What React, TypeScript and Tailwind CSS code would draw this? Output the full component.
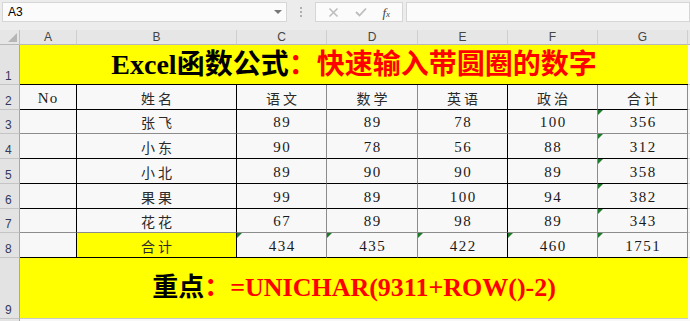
import React from "react";

const BLACK = "border-r-black";
const GRAY = "border-r-[#8c8c8c]";

const colW = ["w-[57px]", "w-[160px]", "w-[90px]", "w-[91px]", "w-[90px]", "w-[90px]", "w-[90px]"];
const colR = [BLACK, BLACK, GRAY, GRAY, BLACK, GRAY, GRAY];
const letters = ["A", "B", "C", "D", "E", "F", "G"];

type Row = {
  n: number;
  h: string;
  b: string;
  cells: string[];
  tri: boolean[];
  yellowB?: boolean;
};

const rows: Row[] = [
  { n: 2, h: "h-[25px]", b: "border-b-black", cells: ["No", "姓名", "语文", "数学", "英语", "政治", "合计"], tri: [false, false, false, false, false, false, false] },
  { n: 3, h: "h-[24px]", b: "border-b-[#8c8c8c]", cells: ["", "张飞", "89", "89", "78", "100", "356"], tri: [false, false, false, false, false, false, true] },
  { n: 4, h: "h-[25px]", b: "border-b-black", cells: ["", "小东", "90", "78", "56", "88", "312"], tri: [false, false, false, false, false, false, true] },
  { n: 5, h: "h-[25px]", b: "border-b-black", cells: ["", "小北", "89", "90", "90", "89", "358"], tri: [false, false, false, false, false, false, true] },
  { n: 6, h: "h-[25px]", b: "border-b-black", cells: ["", "果果", "99", "89", "100", "94", "382"], tri: [false, false, false, false, false, false, true] },
  { n: 7, h: "h-[24px]", b: "border-b-[#8c8c8c]", cells: ["", "花花", "67", "89", "98", "89", "343"], tri: [false, false, false, false, false, false, true] },
  { n: 8, h: "h-[25px]", b: "border-b-black", cells: ["", "合计", "434", "435", "422", "460", "1751"], tri: [false, false, true, true, true, true, true], yellowB: true },
];

const isNum = (s: string) => /^[0-9]+$/.test(s);

function RowHead({ n, h }: { n: number | string; h: string }) {
  return (
    <div className={`${h} w-[20px] shrink-0 bg-[#e3e3e3] border-r border-r-[#a8a8a8] border-b border-b-[#c4c4c4] flex items-end pl-[5px] pb-[1px] text-[12px] leading-[14px] text-[#33395a] font-['Liberation_Sans',sans-serif]`}>
      {n}
    </div>
  );
}

export default function App() {
  return (
    <div className="w-[690px] h-[321px] overflow-hidden bg-[#f0f0f0] font-['Liberation_Sans',sans-serif]">
      {/* formula bar */}
      <div className="h-[30px] flex items-start pt-[2px] bg-[#ececec]">
        <div className="ml-[2px] w-[285px] h-[20px] bg-[#fbfbfb] border border-[#d6d6d6] flex items-center justify-between pl-[5px] pr-[4px]">
          <span className="text-[12px] text-black">A3</span>
          <svg width="8" height="5" viewBox="0 0 8 5"><polygon points="0,0 8,0 4,4" fill="#777" /></svg>
        </div>
        <div className="w-[28px] h-[20px] flex flex-col items-center justify-center gap-[2px]">
          <div className="w-[2px] h-[2px] bg-[#b0b0b0]" />
          <div className="w-[2px] h-[2px] bg-[#b0b0b0]" />
          <div className="w-[2px] h-[2px] bg-[#b0b0b0]" />
        </div>
        <div className="w-[88px] h-[20px] bg-[#fbfbfb] border border-[#d6d6d6] flex items-center justify-around px-[4px]">
          <svg width="11" height="11" viewBox="0 0 11 11"><path d="M1.5 1.5 L9.5 9.5 M9.5 1.5 L1.5 9.5" stroke="#bdbdbd" strokeWidth="1.6" /></svg>
          <svg width="12" height="10" viewBox="0 0 12 10"><path d="M1 5 L4.5 8.5 L11 1.5" stroke="#bdbdbd" strokeWidth="1.8" fill="none" /></svg>
          <span className="italic text-[12px] text-[#444] font-['Liberation_Serif',serif] leading-none"><span className="text-[13px]">f</span><span className="text-[9px]">x</span></span>
        </div>
        <div className="ml-[3px] flex-1 h-[20px] bg-[#fbfbfb] border border-[#d6d6d6]" />
      </div>

      {/* column header */}
      <div className="h-[15px] flex bg-[#e6e6e6]">
        <div className="w-[20px] shrink-0 h-[15px] border-r border-r-[#c0c0c0] border-b border-b-[#b8b8b8] relative">
          <svg className="absolute left-0 top-0" width="20" height="15" viewBox="0 0 20 15"><polygon points="17,3 17,12 8,12" fill="#b6b6b6" /></svg>
        </div>
        {letters.map((l, i) => (
          <div key={l} className={`${colW[i]} shrink-0 h-[15px] border-r border-r-[#cfcfcf] border-b border-b-[#b8b8b8] flex items-center justify-center text-[12px] text-[#444] leading-none`}>
            {l}
          </div>
        ))}
        <div className="flex-1 border-b border-b-[#b8b8b8]" />
      </div>

      {/* row 1 title */}
      <div className="flex">
        <RowHead n={1} h="h-[40px]" />
        <div className="w-[668px] shrink-0 h-[40px] bg-[#ffff00] border-b border-b-black flex items-center justify-center font-bold text-[28px] leading-none font-['Liberation_Serif','Noto_Sans_CJK_SC',serif] whitespace-nowrap">
          <span className="text-black">Excel函数公式</span>
          <span className="text-[#ff0000]">：快速输入带圆圈的数字</span>
        </div>
        <div className="flex-1 bg-[#f8f8f8] border-b border-b-[#d0d0d0]" />
      </div>

      {/* data rows */}
      {rows.map((r) => (
        <div key={r.n} className="flex">
          <RowHead n={r.n} h={r.h} />
          {r.cells.map((c, i) => {
            const yellow = r.yellowB && i === 1;
            return (
              <div
                key={i}
                className={`${colW[i]} ${r.h} shrink-0 relative border-r ${colR[i]} border-b ${r.b} ${yellow ? "bg-[#ffff00]" : "bg-[#f8f8f8]"} flex items-end justify-center pb-[2px] whitespace-nowrap`}
              >
                {r.tri[i] && (
                  <div className="absolute left-0 top-0 w-0 h-0 border-t-[5px] border-t-[#1f7a2c] border-r-[5px] border-r-transparent" />
                )}
                {isNum(c) ? (
                  <span className="text-[15px] leading-[17px] tracking-[1.5px] pl-[1.5px] text-[#1a1a1a] font-['Liberation_Serif',serif]">{c}</span>
                ) : c === "No" ? (
                  <span className="text-[15px] leading-[17px] tracking-[1px] text-[#1a1a1a] font-['Liberation_Serif',serif]">{c}</span>
                ) : (
                  <span className="text-[14px] leading-[17px] tracking-[3px] pl-[3px] text-[#2a2a2a] font-['Noto_Sans_CJK_SC',sans-serif]">{c}</span>
                )}
              </div>
            );
          })}
          <div className={`flex-1 ${r.h} bg-[#f8f8f8] border-b border-b-[#d0d0d0]`} />
        </div>
      ))}

      {/* row 9 */}
      <div className="flex">
        <RowHead n={9} h="h-[61px]" />
        <div className="w-[668px] shrink-0 h-[61px] bg-[#ffff00] border-b border-b-[#c8c8c8] flex items-center justify-center font-bold text-[26px] leading-none font-['Liberation_Serif','Noto_Sans_CJK_SC',serif] whitespace-nowrap">
          <span className="text-black">重点</span>
          <span className="text-[#ff0000]">：=UNICHAR(9311+ROW()-2)</span>
        </div>
        <div className="flex-1 bg-[#f8f8f8]" />
      </div>
      <div className="flex h-[2px]">
        <div className="w-[20px] bg-[#e3e3e3] border-r border-r-[#a8a8a8]" />
        <div className="flex-1 bg-[#f8f8f8]" />
      </div>
    </div>
  );
}
